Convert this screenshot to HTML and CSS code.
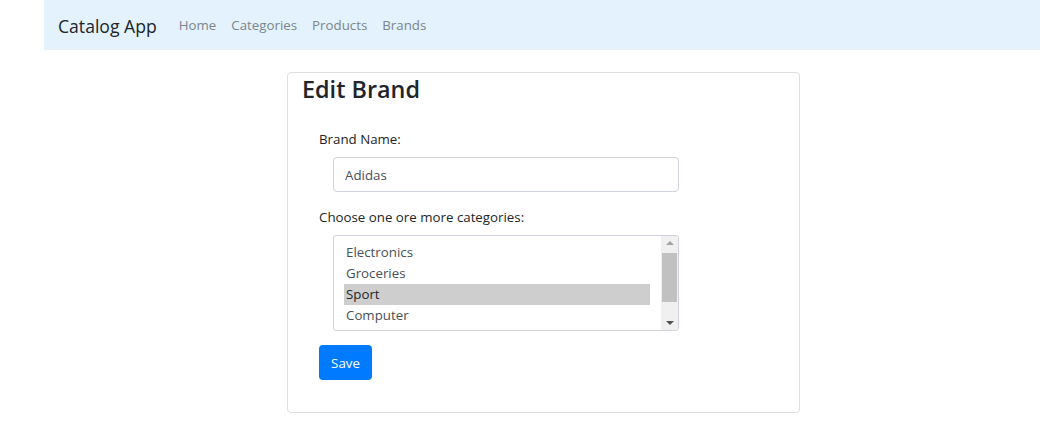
FILE: index.html
```html
<!DOCTYPE html>
<html lang="en">
<head>
<meta charset="utf-8">
<title>Catalog App</title>
<link rel="stylesheet" href="styles.css">
</head>
<body>
<nav class="navbar">
  <a class="brand" href="#">Catalog App</a>
  <ul class="nav-links">
    <li><a href="#">Home</a></li>
    <li><a href="#">Categories</a></li>
    <li><a href="#">Products</a></li>
    <li><a href="#">Brands</a></li>
  </ul>
</nav>
<main class="page">
  <section class="card">
    <h2 class="card-title">Edit Brand</h2>
    <form class="form">
      <label class="label" for="brand-name">Brand Name:</label>
      <div class="field">
        <input class="input" id="brand-name" type="text" value="Adidas">
      </div>
      <label class="label label-cats">Choose one ore more categories:</label>
      <div class="field">
        <div class="listbox">
          <ul class="options">
            <li class="option">Electronics</li>
            <li class="option">Groceries</li>
            <li class="option selected">Sport</li>
            <li class="option">Computer</li>
          </ul>
          <div class="scrollbar">
            <span class="arrow arrow-up"></span>
            <span class="thumb"></span>
            <span class="arrow arrow-down"></span>
          </div>
        </div>
      </div>
      <button class="btn" type="button">Save</button>
    </form>
  </section>
</main>
</body>
</html>
```
FILE: styles.css
```css
* { box-sizing: border-box; }
html, body { margin: 0; padding: 0; background: #fff; }
body {
  font-family: "Open Sans", "Noto Sans", sans-serif;
  color: #212529;
  font-size: 13.3px;
}
.navbar {
  margin-left: 44px;
  height: 50px;
  background: #e3f2fd;
  display: flex;
  align-items: center;
  padding: 0 14px;
}
.brand {
  font-size: 17.6px;
  color: #212529;
  text-decoration: none;
  margin-right: 22px;
  margin-top: 1px;
}
.nav-links {
  list-style: none;
  margin: 0;
  padding: 0;
  display: flex;
  gap: 15px;
}
.nav-links a {
  font-size: 13.3px;
  color: #7d858c;
  text-decoration: none;
}
.page { padding-top: 22px; }
.card {
  margin-left: 287px;
  width: 513px;
  border: 1px solid #dcdfe2;
  border-radius: 4px;
  padding: 0 14px 32px;
}
.card-title {
  margin: 0;
  font-size: 23.4px;
  font-weight: 600;
  line-height: 33px;
}
.form { padding: 23px 0 0 17px; }
.label { display: block; line-height: 20px; margin-bottom: 8px; }
.label-cats { margin-top: 15px; margin-bottom: 8px; }
.field { padding-left: 14px; }
.input {
  width: 346px;
  height: 35px;
  border: 1px solid #ced4da;
  border-radius: 4px;
  padding: 0 11px;
  font: inherit;
  color: #495057;
}
.listbox {
  width: 346px;
  height: 96px;
  border: 1px solid #ced4da;
  border-radius: 3px;
  display: flex;
  justify-content: space-between;
  color: #495057;
}
.options {
  list-style: none;
  margin: 0;
  padding: 6px 0 0 10px;
  width: 316px;
}
.option {
  height: 21px;
  line-height: 21px;
  padding-left: 2px;
}
.option.selected { background: #cecece; color: #212529; }
.scrollbar {
  width: 17px;
  background: #f0f0f0;
  display: flex;
  flex-direction: column;
  align-items: center;
  justify-content: space-between;
  padding: 5px 0;
}
.arrow {
  width: 0;
  height: 0;
  border-left: 4px solid transparent;
  border-right: 4px solid transparent;
}
.arrow-up { border-bottom: 4px solid #a3a3a3; }
.arrow-down { border-top: 4px solid #505050; }
.thumb {
  width: 15px;
  height: 49px;
  background: #c1c1c1;
  margin-top: 8px;
  margin-bottom: auto;
}
.btn {
  margin-top: 14px;
  width: 53px;
  height: 35px;
  background: #007bff;
  color: #fff;
  border: none;
  border-radius: 4px;
  font: inherit;
  padding: 0;
}
```
